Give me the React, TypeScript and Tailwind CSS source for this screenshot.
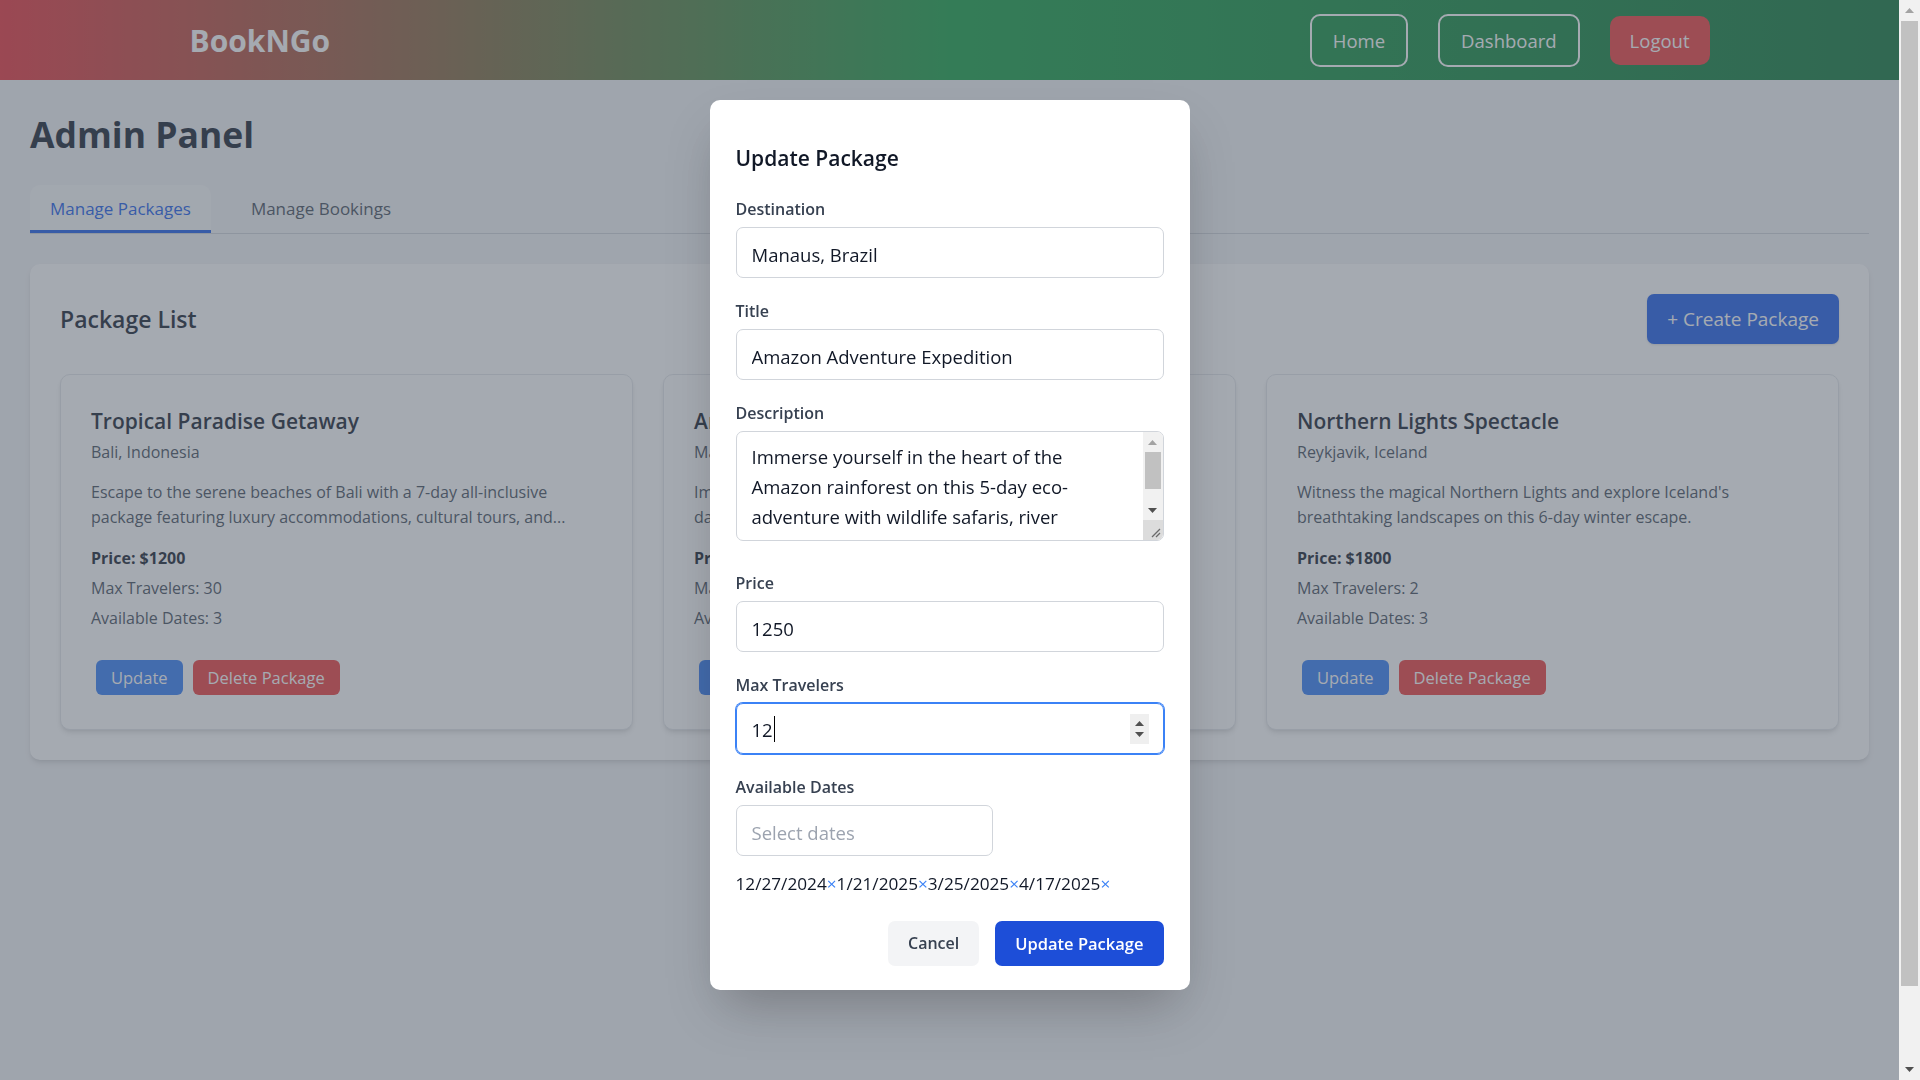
import { FunctionComponent } from "react";

type PackageCardType = {
  title: string;
  destination: string;
  description: string;
  price: number;
  maxTravelers: number;
  dates: number;
};

const packages: PackageCardType[] = [
  {
    title: "Tropical Paradise Getaway",
    destination: "Bali, Indonesia",
    description:
      "Escape to the serene beaches of Bali with a 7-day all-inclusive package featuring luxury accommodations, cultural tours, and...",
    price: 1200,
    maxTravelers: 30,
    dates: 3,
  },
  {
    title: "Amazon Adventure Expedition",
    destination: "Manaus, Brazil",
    description:
      "Immerse yourself in the heart of the Amazon rainforest on this 5-day eco-adventure with wildlife safaris, river cruises, and...",
    price: 1250,
    maxTravelers: 15,
    dates: 4,
  },
  {
    title: "Northern Lights Spectacle",
    destination: "Reykjavik, Iceland",
    description:
      "Witness the magical Northern Lights and explore Iceland's breathtaking landscapes on this 6-day winter escape.",
    price: 1800,
    maxTravelers: 2,
    dates: 3,
  },
];

const dates = ["12/27/2024", "1/21/2025", "3/25/2025", "4/17/2025"];

const PackageCard: FunctionComponent<PackageCardType> = ({
  title,
  destination,
  description,
  price,
  maxTravelers,
  dates,
}) => {
  return (
    <div className="rounded-[10px] border border-[#e5e7eb] bg-white px-[30px] pt-[31px] pb-[34px] shadow-md">
      <h3 className="mb-[4px] text-[21px] leading-[30px] font-semibold text-[#1f2937]">
        {title}
      </h3>
      <p className="text-[16px] leading-[25px] text-[#4b5563]">{destination}</p>
      <p className="mt-[15px] line-clamp-2 text-[16px] leading-[25px] text-[#4b5563]">
        {description}
      </p>
      <p className="mt-[13px] text-[16px] leading-[30px] font-bold text-[#1f2937]">
        Price: ${price}
      </p>
      <p className="text-[16px] leading-[30px] text-[#4b5563]">
        Max Travelers: {maxTravelers}
      </p>
      <p className="text-[16px] leading-[30px] text-[#4b5563]">
        Available Dates: {dates}
      </p>
      <div className="mt-[27px] flex">
        <button className="mx-[5px] rounded-[6px] bg-[#3b82f6] px-[15px] py-[5px] text-[16.5px] leading-[25px] text-white">
          Update
        </button>
        <button className="mx-[5px] rounded-[6px] bg-[#ef4444] px-[15px] py-[5px] text-[16.5px] leading-[25px] text-white">
          Delete Package
        </button>
      </div>
    </div>
  );
};

const Field: FunctionComponent<{ label: string; children: React.ReactNode; className?: string }> = ({
  label,
  children,
  className,
}) => {
  return (
    <div className={className}>
      <label className="mb-[5px] block text-[16px] leading-[25px] font-semibold text-[#374151]">
        {label}
      </label>
      {children}
    </div>
  );
};

const inputClass =
  "block h-[51px] w-full rounded-[7px] border border-[#d1d5db] bg-white px-[15px] pt-[11px] pb-[8px] text-[18.5px] leading-[30px] text-[#111827] outline-none";

// windows-style scrollbar pieces
const ArrowUp = ({ color }: { color: string }) => (
  <svg width="9" height="5" viewBox="0 0 9 5">
    <path d="M0 5 L4.5 0 L9 5 Z" fill={color} />
  </svg>
);

const ArrowDown = ({ color }: { color: string }) => (
  <svg width="9" height="5" viewBox="0 0 9 5">
    <path d="M0 0 L4.5 5 L9 0 Z" fill={color} />
  </svg>
);

const PageScrollbar = () => (
  <div className="fixed top-0 right-0 z-30 flex h-screen w-[21px] flex-col bg-[#f1f1f1]">
    <div className="flex h-[21px] items-center justify-center">
      <ArrowUp color="#a3a3a3" />
    </div>
    <div className="mx-[2px] h-[965px] bg-[#c1c1c1]" />
    <div className="flex-1" />
    <div className="flex h-[21px] items-center justify-center">
      <ArrowDown color="#505050" />
    </div>
  </div>
);

const UpdateModal = () => {
  return (
    <div className="fixed top-0 right-[21px] bottom-0 left-0 z-20 flex items-start justify-center bg-[#4b5563]/50 pt-[100px]">
      <div className="w-[480px] rounded-[10px] bg-white px-[26px] pt-[43px] pb-[24px] shadow-2xl">
        <h2 className="mb-[24px] text-[21px] leading-[30px] font-semibold text-[#111827]">
          Update Package
        </h2>
        <Field label="Destination" className="mb-[21px]">
          <input className={inputClass} readOnly value="Manaus, Brazil" />
        </Field>
        <Field label="Title" className="mb-[21px]">
          <input className={inputClass} readOnly value="Amazon Adventure Expedition" />
        </Field>
        <Field label="Description" className="mb-[30px]">
          <div className="relative">
            <textarea
              readOnly
              className="block h-[110px] w-full resize-none overflow-hidden rounded-[7px] border border-[#d1d5db] pt-[10px] pr-[36px] pb-[8px] pl-[15px] text-[18.5px] leading-[30px] text-[#111827] outline-none"
              value="Immerse yourself in the heart of the Amazon rainforest on this 5-day eco-adventure with wildlife safaris, river cruises, and local village visits."
            />
            <div className="absolute top-[1px] right-[1px] bottom-[1px] flex w-[20px] flex-col overflow-hidden rounded-r-[6px] bg-[#f1f1f1]">
              <div className="flex h-[20px] items-center justify-center">
                <ArrowUp color="#a3a3a3" />
              </div>
              <div className="mx-[2px] h-[37px] bg-[#c1c1c1]" />
              <div className="flex-1" />
              <div className="flex h-[20px] items-center justify-center">
                <ArrowDown color="#505050" />
              </div>
              <div className="relative h-[20px] bg-[#dcdcdc]">
                <svg className="absolute right-[2px] bottom-[2px]" width="12" height="12" viewBox="0 0 12 12">
                  <path d="M11 3 L3 11 M11 7 L7 11" stroke="#6b6b6b" strokeWidth="1.3" />
                </svg>
              </div>
            </div>
          </div>
        </Field>
        <Field label="Price" className="mb-[21px]">
          <input className={inputClass} readOnly value="1250" />
        </Field>
        <Field label="Max Travelers" className="mb-[21px]">
          <div className="relative flex h-[51px] w-full items-center rounded-[7px] border border-[#3b82f6] px-[15px] text-[18.5px] leading-[30px] text-[#111827] ring-1 ring-[#3b82f6]">
            <span className="pt-[3px]">12</span>
            <span className="ml-px inline-block h-[26px] w-px bg-black" />
            <div className="absolute top-1/2 right-[14px] flex h-[30px] w-[19px] -translate-y-1/2 flex-col items-center justify-center gap-[6px] bg-[#efefef]">
              <ArrowUp color="#505050" />
              <ArrowDown color="#505050" />
            </div>
          </div>
        </Field>
        <Field label="Available Dates">
          <input
            className={inputClass + " !w-[257px] placeholder:text-[#9ca3af]"}
            readOnly
            placeholder="Select dates"
          />
        </Field>
        <div className="mt-[15px] flex text-[17.2px] leading-[25px] text-[#111827]">
          {dates.map((d) => (
            <span key={d} className="flex">
              {d}
              <span className="text-[#3b82f6]">×</span>
            </span>
          ))}
        </div>
        <div className="mt-[25px] flex justify-end gap-[16px]">
          <button className="rounded-[7px] bg-[#f3f4f6] px-[20px] py-[10px] text-[16px] leading-[25px] font-semibold text-[#374151]">
            Cancel
          </button>
          <button className="rounded-[7px] bg-[#1d4ed8] px-[20px] py-[10px] text-[16.5px] leading-[25px] font-semibold text-white">
            Update Package
          </button>
        </div>
      </div>
    </div>
  );
};

export default function App() {
  return (
    <div className="min-h-screen bg-[#f3f4f6] pr-[21px] font-['Open_Sans',sans-serif]">
      <header className="h-[80px] bg-[linear-gradient(to_right,#ea3a43,#1da34b_50%,#167a40)]">
        <div className="mx-auto flex h-full max-w-[1600px] items-center justify-between px-[40px]">
          <span className="text-[30px] font-bold text-white">BookNGo</span>
          <nav className="flex items-center gap-[30px]">
            <button className="rounded-[10px] border-2 border-white px-[21px] py-[10px] text-[18.5px] leading-[29px] text-white">
              Home
            </button>
            <button className="rounded-[10px] border-2 border-white px-[21px] py-[10px] text-[18.5px] leading-[29px] text-white">
              Dashboard
            </button>
            <button className="rounded-[10px] bg-[#ef4444] px-[20px] py-[10px] text-[18.5px] leading-[29px] text-white">
              Logout
            </button>
          </nav>
        </div>
      </header>

      <main className="px-[30px] pt-[32px] pb-[30px]">
        <h1 className="mb-[28px] text-[35.5px] leading-[45px] font-bold text-[#1f2937]">
          Admin Panel
        </h1>

        <div className="flex gap-[20px] border-b border-[#d1d5db]">
          <button className="rounded-t-[10px] border-b-[3px] border-[#2563eb] bg-[#f9fafb] px-[20px] pt-[9px] pb-[7px] text-[17px] leading-[29px] font-medium text-[#2563eb]">
            Manage Packages
          </button>
          <button className="border-b-[3px] border-transparent px-[20px] pt-[9px] pb-[7px] text-[17px] leading-[29px] font-medium text-[#4b5563]">
            Manage Bookings
          </button>
        </div>

        <section className="mt-[30px] rounded-[10px] bg-white p-[30px] shadow-md">
          <div className="flex h-[50px] items-center justify-between">
            <h2 className="text-[23px] font-semibold text-[#1f2937]">Package List</h2>
            <button className="rounded-[7px] bg-[#2563eb] px-[20px] py-[10px] text-[19px] leading-[30px] text-white shadow">
              + Create Package
            </button>
          </div>
          <div className="mt-[30px] grid grid-cols-3 gap-[30px]">
            {packages.map((p) => (
              <PackageCard key={p.title} {...p} />
            ))}
          </div>
        </section>
      </main>

      <UpdateModal />
      <PageScrollbar />
    </div>
  );
}
